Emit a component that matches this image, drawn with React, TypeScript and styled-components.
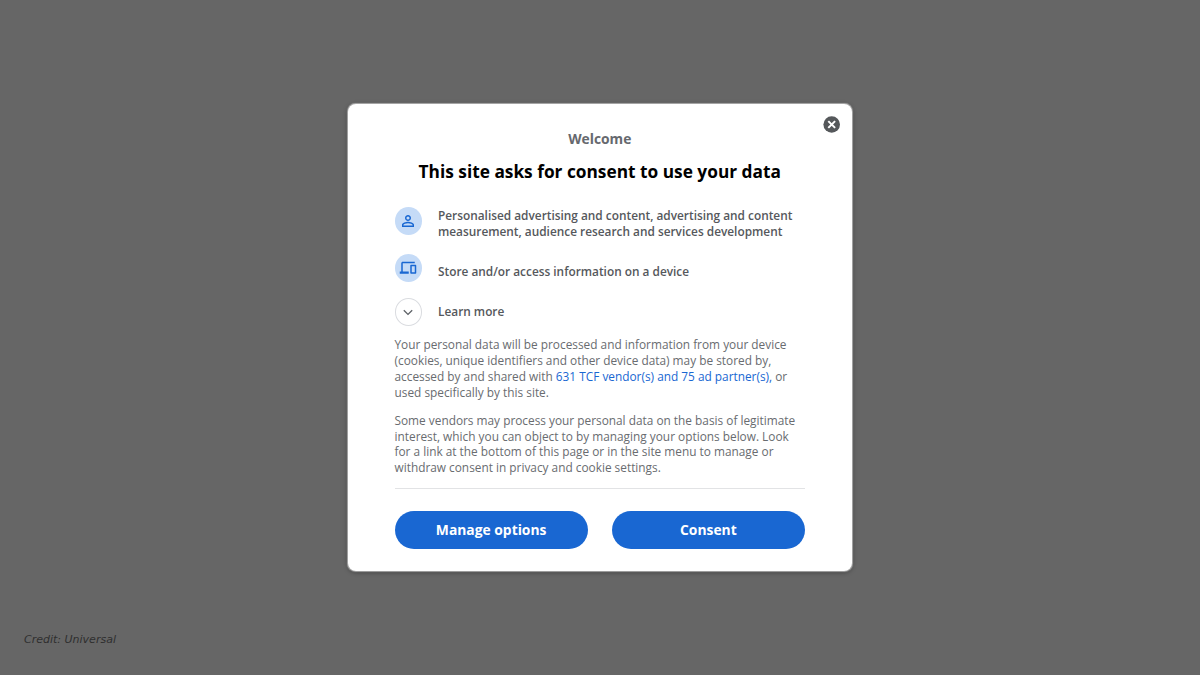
import React from "react";
import styled, { createGlobalStyle } from "styled-components";

const GlobalStyle = createGlobalStyle`
  body {
    margin: 0;
    background-color: #666;
    font-family: "Open Sans", sans-serif;
  }
`;

const Page = styled.div`
  position: relative;
  box-sizing: border-box;
  height: 675px;
  padding-top: 104px;
  overflow: hidden;
`;

const Dialog = styled.div`
  position: relative;
  box-sizing: border-box;
  width: 504px;
  height: 467px;
  margin: 0 auto;
  padding: 25px 47px 0 46.5px;
  background-color: #fff;
  border-radius: 8px;
  box-shadow: 0 0 1px 0.5px rgba(255, 255, 255, 0.5),
    0 1px 5px rgba(0, 0, 0, 0.45);
`;

const CloseButton = styled.button`
  position: absolute;
  top: 12px;
  right: 12px;
  width: 17px;
  height: 17px;
  padding: 0;
  border: none;
  background: none;
  cursor: pointer;

  & > svg {
    display: block;
  }
`;

const Welcome = styled.div`
  color: #66696e;
  font-size: 13.85px;
  font-weight: 700;
  line-height: 19px;
  text-align: center;
`;

const Title = styled.h1`
  margin: 10px 0 0;
  color: #000;
  font-size: 17.3px;
  font-weight: 700;
  line-height: 27px;
  text-align: center;
`;

const Row = styled.div<{ gap: number }>`
  display: flex;
  align-items: flex-start;
  margin-top: ${(p) => p.gap}px;
`;

const Circle = styled.div<{ outlined?: boolean }>`
  display: flex;
  align-items: center;
  justify-content: center;
  flex-shrink: 0;
  box-sizing: border-box;
  width: 27.5px;
  height: 28px;
  margin-right: 16px;
  border: ${(p) => (p.outlined ? "1px solid #dadce0" : "none")};
  border-radius: 50%;
  background-color: ${(p) => (p.outlined ? "#fff" : "#c5dbf7")};
`;

const RowText = styled.div<{ offset: number }>`
  margin-top: ${(p) => p.offset}px;
  color: #55585c;
  font-size: 11.85px;
  font-weight: 600;
  line-height: 16px;
  white-space: nowrap;
`;

const Paragraph = styled.p<{ gap: number }>`
  margin: ${(p) => p.gap}px 0 0;
  color: #696c70;
  font-size: 11.85px;
  line-height: 15.85px;
  white-space: nowrap;
`;

const Link = styled.a`
  color: #1967d2;
  text-decoration: none;
`;

const Footer = styled.div`
  display: flex;
  gap: 24px;
  margin-top: 11.6px;
  padding-top: 22.5px;
  border-top: 1px solid #e2e3e5;
`;

const Button = styled.button`
  flex: 1;
  height: 37.5px;
  padding: 0;
  border: none;
  border-radius: 19px;
  background-color: #1967d2;
  color: #fff;
  font-family: inherit;
  font-size: 13.85px;
  font-weight: 700;
  cursor: pointer;
`;

const Credit = styled.div`
  position: absolute;
  left: 24px;
  bottom: 27px;
  color: #2f2f2f;
  font-family: "DejaVu Sans", sans-serif;
  font-size: 11px;
  font-style: italic;
  line-height: 16px;
`;

const CloseIcon = () => (
  <svg width="17" height="17" viewBox="0 0 17 17">
    <circle cx="8.7" cy="8.5" r="8.3" fill="#55585b" />
    <path d="M5.3 5.1l6.8 6.8M12.1 5.1l-6.8 6.8" stroke="#fff" strokeWidth="2" />
  </svg>
);

const PersonIcon = () => (
  <svg width="18" height="18" viewBox="0 0 24 24" fill="#1967d2">
    <path d="M12 5.9a2.1 2.1 0 1 1 0 4.2 2.1 2.1 0 0 1 0-4.2m0 9c2.97 0 6.1 1.46 6.1 2.1v1.1H5.9V17c0-.64 3.13-2.1 6.1-2.1M12 4C9.79 4 8 5.79 8 8s1.79 4 4 4 4-1.79 4-4-1.79-4-4-4zm0 9c-2.67 0-8 1.34-8 4v3h16v-3c0-2.66-5.33-4-8-4z" />
  </svg>
);

const DevicesIcon = () => (
  <svg width="18" height="18" viewBox="0 0 24 24" fill="#1967d2">
    <path d="M5 5.5h16V3.5H5c-1.1 0-2 .9-2 2v11H1v3h12v-3H5v-11zM22 7.500h-6c-.55 0-1 .45-1 1v10c0 .55.45 1 1 1h6c.55 0 1-.45 1-1v-10c0-.55-.45-1-1-1zm-1 10h-4v-8h4v8z" />
  </svg>
);

const ExpandIcon = () => (
  <svg width="16" height="16" viewBox="0 0 24 24" fill="#5f6368">
    <path d="M17.59 8.59 12 14.17 6.41 8.59 5 10l7 7 7-7z" />
  </svg>
);

const App = () => {
  return (
    <Page>
      <GlobalStyle />
      <Dialog>
        <CloseButton aria-label="Close">
          <CloseIcon />
        </CloseButton>
        <Welcome>Welcome</Welcome>
        <Title>This site asks for consent to use your data</Title>
        <Row gap={22}>
          <Circle>
            <PersonIcon />
          </Circle>
          <RowText offset={0}>
            Personalised advertising and content, advertising and content
            <br />
            measurement, audience research and services development
          </RowText>
        </Row>
        <Row gap={15}>
          <Circle>
            <DevicesIcon />
          </Circle>
          <RowText offset={9}>
            Store and/or access information on a device
          </RowText>
        </Row>
        <Row gap={16}>
          <Circle outlined>
            <ExpandIcon />
          </Circle>
          <RowText offset={5}>Learn more</RowText>
        </Row>
        <Paragraph gap={11.4}>
          Your personal data will be processed and information from your device
          <br />
          (cookies, unique identifiers and other device data) may be stored by,
          <br />
          accessed by and shared with{" "}
          <Link>631 TCF vendor(s) and 75 ad partner(s),</Link> or
          <br />
          used specifically by this site.
        </Paragraph>
        <Paragraph gap={12}>
          Some vendors may process your personal data on the basis of legitimate
          <br />
          interest, which you can object to by managing your options below. Look
          <br />
          for a link at the bottom of this page or in the site menu to manage or
          <br />
          withdraw consent in privacy and cookie settings.
        </Paragraph>
        <Footer>
          <Button>Manage options</Button>
          <Button>Consent</Button>
        </Footer>
      </Dialog>
      <Credit>Credit: Universal</Credit>
    </Page>
  );
};

export default App;
